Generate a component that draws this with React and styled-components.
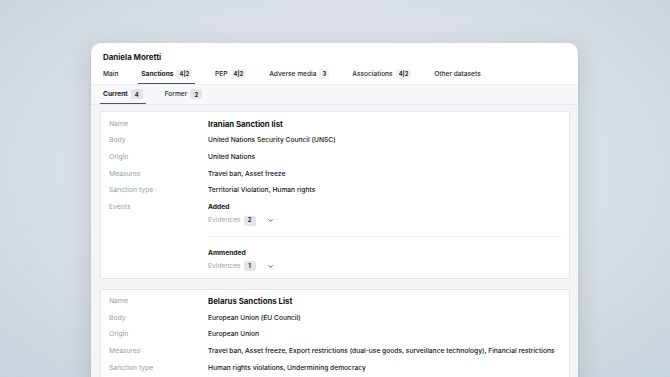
import React from "react";
import styled, { createGlobalStyle } from "styled-components";

const GlobalStyle = createGlobalStyle`
  html, body {
    margin: 0;
    height: 377px;
    overflow: hidden;
  }
  body {
    font-family: Inter, "Liberation Sans", sans-serif;
    color: #15181c;
    background: radial-gradient(ellipse at 50% 45%, #e6e9ee 0%, #dde2e8 45%, #c9d3db 100%);
  }
  #root {
    padding-top: 43px;
  }
`;

const Panel = styled.div`
  margin-left: 91px;
  width: 487px;
  background: #f7f8fa;
  border-radius: 10px;
  overflow: hidden;
  box-shadow: 0 6px 24px rgba(40, 55, 75, 0.16), 0 1px 3px rgba(40, 55, 75, 0.08);
`;

const Header = styled.div`
  background: #fff;
  padding: 8px 9px 0;
  border-bottom: 1px solid #eceef1;
`;

const PersonName = styled.div`
  font-size: 7.9px;
  font-weight: 700;
  line-height: 12px;
  padding-left: 3px;
`;

const TabRow = styled.div`
  display: flex;
  gap: ${(p) => p.gap}px;
  margin-top: ${(p) => p.top || 0}px;
`;

const Tab = styled.div`
  display: flex;
  align-items: center;
  gap: 3px;
  padding: 0 3px;
  height: ${(p) => p.height}px;
  font-size: 6.6px;
  font-weight: ${(p) => (p.active ? 700 : 500)};
  color: ${(p) => (p.active ? "#15181c" : "#24282d")};
  border-bottom: 1.5px solid ${(p) => (p.active ? "#4b5563" : "transparent")};
  box-sizing: border-box;
`;

const Count = styled.span`
  display: inline-flex;
  align-items: center;
  justify-content: center;
  min-width: ${(p) => (p.dark ? 12 : 10)}px;
  height: 10px;
  padding: 0 3px;
  box-sizing: border-box;
  border-radius: 2px;
  background: ${(p) => (p.dark ? "#e2e6eb" : "#eff1f4")};
  font-size: 5.8px;
  font-weight: 700;
  color: #24282d;
`;

const SubTabs = styled.div`
  padding: 0 9px;
  border-bottom: 1px solid #e8eaee;
  background: #f7f8fa;
`;

const Content = styled.div`
  background: #f4f5f7;
  padding: 6px 8px 20px 9px;
  display: flex;
  flex-direction: column;
  gap: 10px;
`;

const Card = styled.div`
  background: #fff;
  border: 1px solid #e2e5e9;
  border-radius: 2px;
  padding: 3.5px 8px 5px;
`;

const Row = styled.div`
  display: grid;
  grid-template-columns: 99px 1fr;
  line-height: 16.7px;
  font-size: 6.7px;
`;

const Label = styled.div`
  color: #959eab;
  font-size: 6.8px;
`;

const Value = styled.div`
  color: #111316;
  font-weight: 500;
`;

const Title = styled.div`
  font-size: 7.8px;
  font-weight: 700;
  color: #111316;
`;

const Events = styled.div`
  padding-top: 2px;
`;

const Event = styled.div`
  padding: ${(p) => (p.first ? "0 0 9px" : "9.5px 0 0")};
  border-bottom: ${(p) => (p.first ? "1px solid #eceef1" : "none")};
`;

const EventTitle = styled.div`
  font-size: 6.7px;
  font-weight: 700;
  line-height: 13px;
  color: #111316;
`;

const EvidenceLine = styled.div`
  display: flex;
  align-items: center;
  height: 13px;
  gap: 3px;
  color: #98a1ae;
  font-size: 6.7px;
`;

const Chevron = styled.svg`
  margin-left: 8px;
  width: 7px;
  height: 7px;
`;

const tabs = [
  { name: "Main" },
  { name: "Sanctions", count: "4|2", active: true },
  { name: "PEP", count: "4|2" },
  { name: "Adverse media", count: "3" },
  { name: "Associations", count: "4|2" },
  { name: "Other datasets" },
];

const sanctions = [
  {
    name: "Iranian Sanction list",
    body: "United Nations Security Council (UNSC)",
    origin: "United Nations",
    measures: "Travel ban, Asset freeze",
    type: "Territorial Violation, Human rights",
    events: [
      { title: "Added", count: 2 },
      { title: "Ammended", count: 1 },
    ],
  },
  {
    name: "Belarus Sanctions List",
    body: "European Union (EU Council)",
    origin: "European Union",
    measures:
      "Travel ban, Asset freeze, Export restrictions (dual-use goods, surveillance technology), Financial restrictions",
    type: "Human rights violations, Undermining democracy",
    events: [
      { title: "Added", count: 1 },
      { title: "Ammended", count: 3 },
    ],
  },
];

function ChevronDown() {
  return (
    <Chevron viewBox="0 0 24 24" fill="none" stroke="#24282d" strokeWidth="2.6" strokeLinecap="round" strokeLinejoin="round">
      <path d="M6 9l6 6 6-6" />
    </Chevron>
  );
}

function SanctionCard({ item }) {
  return (
    <Card>
      <Row>
        <Label>Name</Label>
        <Title>{item.name}</Title>
      </Row>
      <Row>
        <Label>Body</Label>
        <Value>{item.body}</Value>
      </Row>
      <Row>
        <Label>Origin</Label>
        <Value>{item.origin}</Value>
      </Row>
      <Row>
        <Label>Measures</Label>
        <Value>{item.measures}</Value>
      </Row>
      <Row>
        <Label>Sanction type</Label>
        <Value>{item.type}</Value>
      </Row>
      <Row>
        <Label>Events</Label>
        <Events>
          {item.events.map((ev, i) => (
            <Event key={ev.title} first={i === 0}>
              <EventTitle>{ev.title}</EventTitle>
              <EvidenceLine>
                Evidences <Count dark>{ev.count}</Count>
                <ChevronDown />
              </EvidenceLine>
            </Event>
          ))}
        </Events>
      </Row>
    </Card>
  );
}

export default function App() {
  return (
    <>
      <GlobalStyle />
      <Panel>
        <Header>
          <PersonName>Daniela Moretti</PersonName>
          <TabRow gap={16.9} top={1}>
            {tabs.map((t) => (
              <Tab key={t.name} active={t.active} height={20}>
                {t.name}
                {t.count && <Count>{t.count}</Count>}
              </Tab>
            ))}
          </TabRow>
        </Header>
        <SubTabs>
          <TabRow gap={16}>
            <Tab active height={19}>
              Current <Count dark>4</Count>
            </Tab>
            <Tab height={19}>
              Former <Count dark>2</Count>
            </Tab>
          </TabRow>
        </SubTabs>
        <Content>
          {sanctions.map((s) => (
            <SanctionCard key={s.name} item={s} />
          ))}
        </Content>
      </Panel>
    </>
  );
}
